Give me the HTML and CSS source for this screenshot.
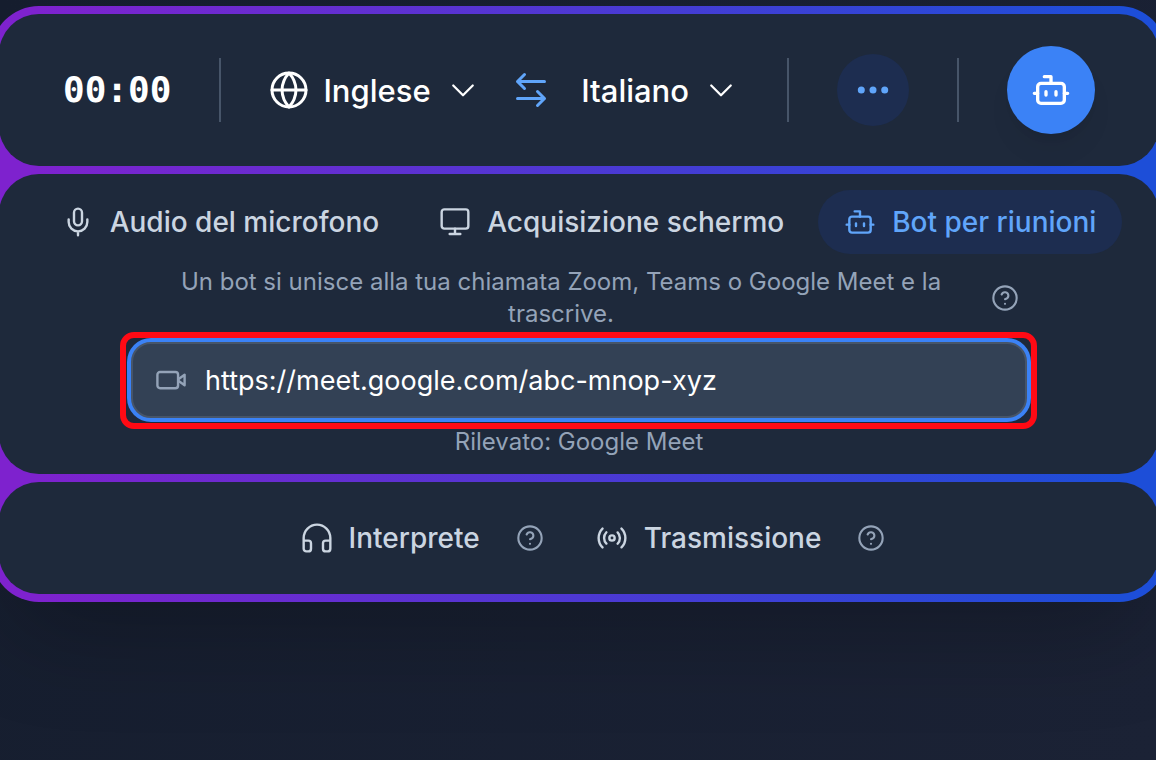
FILE: index.html
```html
<!DOCTYPE html>
<html lang="it">
<head>
<meta charset="utf-8">
<meta name="viewport" content="width=device-width, initial-scale=1">
<title>Trascrizione riunioni</title>
<link rel="stylesheet" href="styles.css">
</head>
<body>
<svg class="sprite" aria-hidden="true">
  <symbol id="bot" viewBox="0 0 24 24"><path d="M12 8V4H8"/><rect x="4" y="8" width="16" height="12" rx="2"/><path d="M2 14h2M20 14h2M15 13v2M9 13v2"/></symbol>
  <symbol id="help" viewBox="0 0 24 24"><circle cx="12" cy="12" r="10"/><path d="M9.1 9a3 3 0 0 1 5.8 1c0 2-2.9 3-2.9 3M12 17h.01"/></symbol>
  <symbol id="chevron" viewBox="0 0 24 24"><path d="m5.500 9 6.500 6.500 6.500-6.500"/></symbol>
</svg>
<main class="panel">
  <header class="card toolbar">
    <time class="timer">00:00</time>
    <span class="divider"></span>
    <div class="languages">
      <div class="language">
        <svg class="icon icon-globe" viewBox="0 0 24 24"><circle cx="12" cy="12" r="10.200"/><path d="M1.800 12h20.400M12 1.800a15.500 15.500 0 0 1 4.200 10.200A15.500 15.500 0 0 1 12 22.200 15.500 15.500 0 0 1 7.800 12 15.500 15.500 0 0 1 12 1.800Z"/></svg>
        <select class="language-select" aria-label="Lingua di origine"><option>Inglese</option></select>
        <svg class="icon icon-chevron"><use href="#chevron"/></svg>
      </div>
      <button class="swap" type="button" aria-label="Scambia lingue">
        <svg class="icon icon-swap" viewBox="0 0 40 40"><path d="M33.500 11.500H6.500M13.500 4.500l-7 7 7 7M6.500 28.500h27M26.500 21.500l7 7-7 7"/></svg>
      </button>
      <div class="language">
        <select class="language-select" aria-label="Lingua di destinazione"><option>Italiano</option></select>
        <svg class="icon icon-chevron"><use href="#chevron"/></svg>
      </div>
    </div>
    <span class="divider"></span>
    <button class="more" type="button" aria-label="Altre opzioni">
      <svg class="icon-dots" viewBox="0 0 36 36"><circle cx="6.300" cy="18" r="3.500"/><circle cx="18" cy="18" r="3.500"/><circle cx="29.700" cy="18" r="3.500"/></svg>
    </button>
    <span class="divider"></span>
    <button class="start" type="button" aria-label="Avvia bot">
      <svg class="icon icon-start"><use href="#bot"/></svg>
    </button>
  </header>

  <section class="card source">
    <nav class="tabs">
      <button class="tab" type="button">
        <svg class="icon" viewBox="0 0 24 24"><rect x="9" y="2" width="6" height="12.500" rx="3"/><path d="M19 10v2a7 7 0 0 1-14 0v-2M12 19v3"/></svg>
        <span>Audio del microfono</span>
      </button>
      <button class="tab" type="button">
        <svg class="icon" viewBox="0 0 24 24"><rect x="2" y="2.500" width="20" height="14.500" rx="2"/><path d="M8 21h8M12 17v4"/></svg>
        <span>Acquisizione schermo</span>
      </button>
      <button class="tab tab-active" type="button">
        <svg class="icon"><use href="#bot"/></svg>
        <span>Bot per riunioni</span>
      </button>
    </nav>
    <div class="description">
      <p class="hint">Un bot si unisce alla tua chiamata Zoom, Teams o Google Meet e la trascrive.</p>
      <button class="help" type="button" aria-label="Informazioni sul bot"><svg class="icon icon-help"><use href="#help"/></svg></button>
    </div>
    <div class="field">
      <svg class="icon icon-video" viewBox="0 0 24 24"><rect x="1.800" y="6" width="15.500" height="12.200" rx="2"/><path d="m17.500 11.500 4.700-3.500v8l-4.700-3.500"/></svg>
      <input class="url" type="text" value="https://meet.google.com/abc-mnop-xyz" aria-label="Link della riunione" spellcheck="false">
    </div>
    <p class="detected">Rilevato: Google Meet</p>
  </section>

  <footer class="card modes">
    <div class="mode">
      <button class="tab" type="button">
        <svg class="icon" viewBox="0 0 24 24"><path d="M2 14h3.500a2 2 0 0 1 2 2v4a2 2 0 0 1-2 2H4a2 2 0 0 1-2-2v-8a10 10 0 0 1 20 0v8a2 2 0 0 1-2 2h-1.500a2 2 0 0 1-2-2v-4a2 2 0 0 1 2-2H22"/></svg>
        <span>Interprete</span>
      </button>
      <button class="help" type="button" aria-label="Informazioni su Interprete"><svg class="icon icon-help"><use href="#help"/></svg></button>
    </div>
    <div class="mode">
      <button class="tab" type="button">
        <svg class="icon" viewBox="0 0 24 24"><path d="M4.900 19.100C1 15.200 1 8.800 4.900 4.900M7.800 16.200c-2.300-2.300-2.300-6.100 0-8.500"/><circle cx="12" cy="12" r="2"/><path d="M16.200 7.800c2.300 2.300 2.300 6.100 0 8.500M19.100 4.900C23 8.800 23 15.100 19.100 19"/></svg>
        <span>Trasmissione</span>
      </button>
      <button class="help" type="button" aria-label="Informazioni su Trasmissione"><svg class="icon icon-help"><use href="#help"/></svg></button>
    </div>
  </footer>
</main>
</body>
</html>
```
FILE: styles.css
```css
* { box-sizing: border-box; }

body {
  margin: 0;
  min-height: 100vh;
  padding-top: 6px;
  overflow: hidden;
  font-family: Inter, "Liberation Sans", sans-serif;
  background: linear-gradient(100deg, #161e2f, #1b2235);
}

button, select, input { font: inherit; color: inherit; }
button { border: 0; padding: 0; background: none; cursor: pointer; }
p { margin: 0; }
.sprite { display: none; }

.icon {
  width: 32px;
  height: 32px;
  flex: none;
  fill: none;
  stroke: currentColor;
  stroke-width: 1.8;
  stroke-linecap: round;
  stroke-linejoin: round;
}

.panel {
  display: flex;
  flex-direction: column;
  gap: 8px;
  margin: 0 -11px 0 -9px;
  padding: 8px;
  border-radius: 48px;
  background: linear-gradient(90deg, #7e22ce 4%, #1d4ed8 96%);
  box-shadow: 0 50px 100px -24px rgba(0, 0, 0, .25);
}

.card { border-radius: 40px; background: #1e293b; }

.toolbar {
  display: flex;
  align-items: center;
  gap: 48px;
  padding: 32px 64px;
  color: #fff;
}
.timer { font: bold 36px/40px "DejaVu Sans Mono", monospace; }
.divider { width: 2px; height: 64px; background: #475569; }

.languages { flex: 1; display: flex; align-items: center; justify-content: space-between; }
.language { display: flex; align-items: center; gap: 14px; }
.language-select {
  appearance: none;
  field-sizing: content;
  border: 0;
  padding: 2px 0 0;
  background: none;
  font-size: 31px;
  font-weight: 500;
  line-height: 40px;
}
.icon-globe { width: 40px; height: 40px; }
.icon-chevron { width: 36px; height: 36px; stroke-width: 1.5; }
.swap { display: flex; color: #60a5fa; }
.icon-swap { width: 40px; height: 40px; stroke-width: 3; }

.more, .start { display: flex; align-items: center; justify-content: center; flex: none; border-radius: 50%; }
.more { width: 72px; height: 72px; background: #1d2d50; }
.icon-dots { width: 36px; height: 36px; fill: #60a5fa; }
.start {
  width: 88px;
  height: 88px;
  background: #3b82f6;
  box-shadow: 0 20px 30px -6px rgba(0, 0, 0, .06), 0 8px 12px -8px rgba(0, 0, 0, .1);
}
.icon-start { width: 40px; height: 40px; stroke-width: 2; }

.source { display: flex; flex-direction: column; align-items: center; padding: 16px; }
.tabs { display: flex; gap: 8px; }
.tab {
  display: flex;
  align-items: center;
  gap: 16px;
  height: 64px;
  padding: 0 28px;
  border-radius: 32px;
  color: #cbd5e1;
  font-size: 28px;
  font-weight: 500;
  white-space: nowrap;
}
.tabs .tab { padding: 0 26px; }
.tabs .tab-active { background: #1d2d50; color: #60a5fa; }

.description {
  display: flex;
  align-items: center;
  width: 100%;
  max-width: 896px;
  margin: 12px 0;
  padding-right: 8px;
}
.hint, .detected { font-size: 24px; line-height: 32px; color: #94a3b8; text-align: center; }
.hint { flex: 1; padding: 0 40px; }
.help { display: flex; color: #94a3b8; }
.icon-help { width: 28px; height: 28px; }

.field {
  position: relative;
  display: flex;
  align-items: center;
  gap: 16px;
  width: 100%;
  max-width: 896px;
  height: 76px;
  margin-bottom: 8px;
  padding: 0 24px 0 22px;
  border: 2px solid #475569;
  border-radius: 20px;
  background: #334155;
  box-shadow: 0 0 0 4px #3b82f6;
}
/* Highlight frame around the focused field */
.field::after {
  content: "";
  position: absolute;
  inset: -12px -12px -13px -13px;
  border: 6px solid #ff0a14;
  border-radius: 14px;
  pointer-events: none;
}
.icon-video { color: #94a3b8; }
.url {
  flex: 1;
  min-width: 0;
  border: 0;
  padding: 0 2px;
  outline: 0;
  background: none;
  color: #fff;
  font-size: 27px;
}

.modes { display: flex; justify-content: center; gap: 24px; padding: 24px; }
.mode { display: flex; align-items: center; gap: 8px; }
```
